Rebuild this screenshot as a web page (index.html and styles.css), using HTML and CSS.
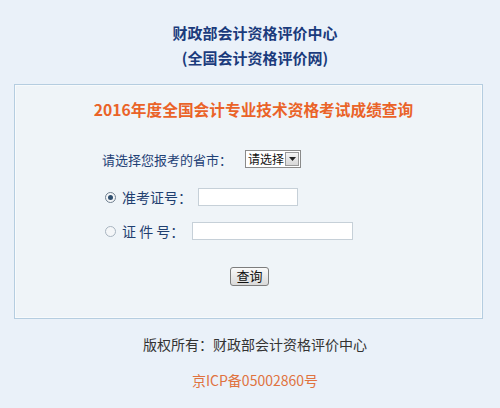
FILE: index.html
```html
<!DOCTYPE html>
<html lang="zh-CN">
<head>
<meta charset="utf-8">
<title>成绩查询</title>
<link rel="stylesheet" href="styles.css">
</head>
<body>
<div class="header">
  <div class="title">财政部会计资格评价中心</div>
  <div class="title">(全国会计资格评价网)</div>
</div>
<div class="box">
  <div class="heading">2016年度全国会计专业技术资格考试成绩查询</div>
  <div class="form">
    <div class="row row-select">
      <span class="label">请选择您报考的省市：</span>
      <span class="select"><span class="select-text">请选择</span><span class="select-btn"><svg width="7" height="4" viewBox="0 0 7 4"><path d="M0 0H7L3.5 4Z" fill="#222"/></svg></span></span>
    </div>
    <div class="row row-radio">
      <span class="radio checked"></span>
      <span class="label label-lg">准考证号：</span>
      <span class="input input-short"></span>
    </div>
    <div class="row row-radio row-2">
      <span class="radio"></span>
      <span class="label label-lg">证 件 号：</span>
      <span class="input input-long"></span>
    </div>
    <div class="row-btn"><span class="btn">查询</span></div>
  </div>
</div>
<div class="footer">
  <div class="copy">版权所有：财政部会计资格评价中心</div>
  <div class="icp">京ICP备05002860号</div>
</div>
</body>
</html>
```
FILE: styles.css
```css
html, body {
  margin: 0;
  padding: 0;
  background: #eaf1f9;
  font-family: "Noto Sans CJK SC", "Noto Sans", sans-serif;
}
.header {
  padding-top: 20px;
  padding-left: 10px;
  text-align: center;
}
.title {
  font-size: 15px;
  line-height: 25px;
  font-weight: bold;
  color: #1b3b7c;
}
.box {
  margin: 14px 17px 0 14px;
  height: 233px;
  border: 1px solid #b5cde0;
  background: #eff4f8;
  box-shadow: inset 0 0 0 1px #f7fafc;
}
.heading {
  padding-top: 13px;
  padding-left: 10px;
  text-align: center;
  font-size: 15.7px;
  line-height: 24px;
  font-weight: bold;
  color: #ea6328;
}
.form {
  padding-left: 87px;
  padding-top: 28px;
}
.row {
  display: flex;
  align-items: center;
  height: 18px;
}
.label {
  font-size: 13px;
  color: #1f4176;
}
.label-lg {
  font-size: 14px;
  color: #1f3f70;
  margin-left: 6px;
}
.select {
  display: flex;
  margin-left: 13px;
  width: 56px;
  height: 18px;
  box-sizing: border-box;
  border: 1px solid #8a8a8a;
  background: #fff;
}
.select-text {
  font-size: 12px;
  line-height: 16px;
  padding-left: 2px;
  color: #111;
  flex: 1;
}
.select-btn {
  width: 14px;
  margin: 1px;
  box-sizing: border-box;
  border: 1px solid #999;
  background: linear-gradient(#f4f4f4, #d8d8d8);
  display: flex;
  align-items: center;
  justify-content: center;
}
.row-radio {
  margin-top: 20px;
  padding-left: 3px;
}
.row-2 {
  margin-top: 16px;
}
.radio {
  width: 9px;
  height: 9px;
  border-radius: 50%;
  border: 1px solid #a8b4c0;
  background: #f4f6f8;
  box-sizing: content-box;
  position: relative;
}
.radio.checked {
  border-color: #6f7f8f;
}
.radio.checked::after {
  content: "";
  position: absolute;
  left: 2px;
  top: 2px;
  width: 5px;
  height: 5px;
  border-radius: 50%;
  background: #2f4f6f;
}
.input {
  display: block;
  height: 18px;
  box-sizing: border-box;
  border: 1px solid #c6d0d8;
  background: #fff;
}
.input-short {
  width: 100px;
  margin-left: 6px;
}
.input-long {
  width: 161px;
  margin-left: 8px;
}
.row-btn {
  margin-top: 22px;
  padding-left: 128px;
}
.btn {
  display: inline-block;
  width: 39px;
  height: 19px;
  box-sizing: border-box;
  border: 1px solid #7d7d7d;
  border-radius: 3px;
  background: linear-gradient(#fafafa, #d9d9d9);
  text-align: center;
  font-size: 13px;
  line-height: 16px;
  color: #111;
}
.footer {
  text-align: center;
  padding-top: 14px;
  padding-left: 10px;
}
.copy {
  font-size: 14px;
  line-height: 22px;
  color: #333;
}
.icp {
  margin-top: 14px;
  font-size: 14px;
  line-height: 22px;
  color: #e0733f;
}
```
